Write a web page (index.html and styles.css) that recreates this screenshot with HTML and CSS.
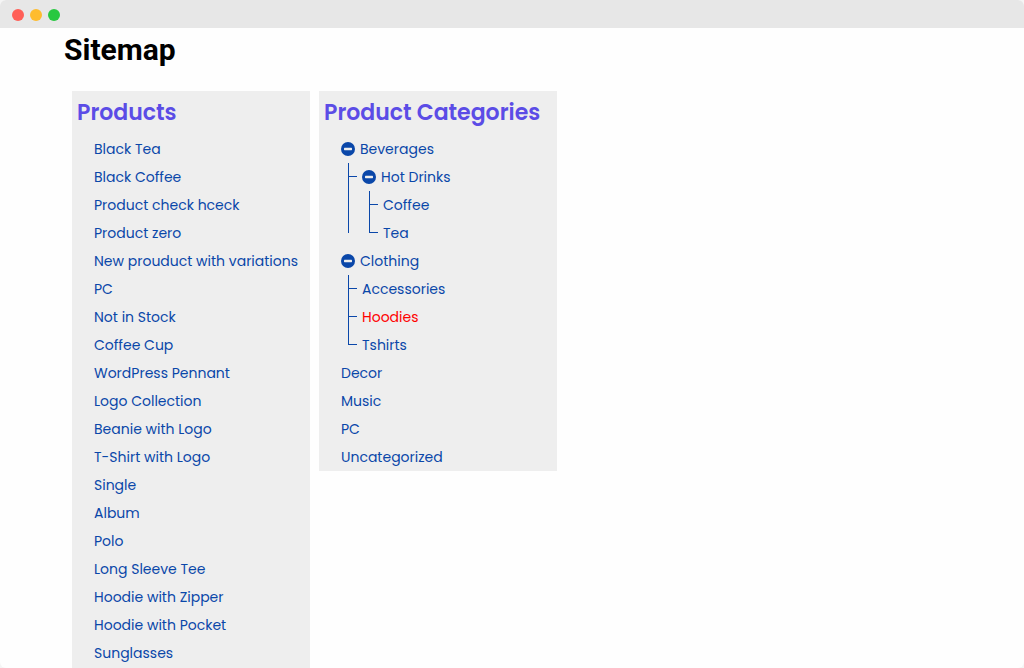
FILE: index.html
```
<!DOCTYPE html>
<html lang="en">
<head>
    <meta charset="UTF-8">
    <meta name="viewport" content="width=device-width, initial-scale=1.0">
    <title>Sitemap</title>
    <link rel="stylesheet" href="styles.css">
</head>
<body>
    <div class="window">
        <!-- Window bar -->
        <div class="window-bar">
            <span class="dot dot-red"></span>
            <span class="dot dot-yellow"></span>
            <span class="dot dot-green"></span>
        </div>

        <main class="sitemap">
            <h1>Sitemap</h1>
            <div class="columns">
                <!-- Products -->
                <section class="box box-full">
                    <h2>Products</h2>
                    <ul class="list">
                        <li><a href="#">Black Tea</a></li>
                        <li><a href="#">Black Coffee</a></li>
                        <li><a href="#">Product check hceck</a></li>
                        <li><a href="#">Product zero</a></li>
                        <li><a href="#">New prouduct with variations</a></li>
                        <li><a href="#">PC</a></li>
                        <li><a href="#">Not in Stock</a></li>
                        <li><a href="#">Coffee Cup</a></li>
                        <li><a href="#">WordPress Pennant</a></li>
                        <li><a href="#">Logo Collection</a></li>
                        <li><a href="#">Beanie with Logo</a></li>
                        <li><a href="#">T-Shirt with Logo</a></li>
                        <li><a href="#">Single</a></li>
                        <li><a href="#">Album</a></li>
                        <li><a href="#">Polo</a></li>
                        <li><a href="#">Long Sleeve Tee</a></li>
                        <li><a href="#">Hoodie with Zipper</a></li>
                        <li><a href="#">Hoodie with Pocket</a></li>
                        <li><a href="#">Sunglasses</a></li>
                    </ul>
                </section>

                <!-- Product categories -->
                <section class="box">
                    <h2>Product Categories</h2>
                    <ul class="list">
                        <li>
                            <div class="row">
                                <button type="button" class="toggle" aria-label="Toggle Beverages" aria-expanded="true">
                                    <svg viewBox="0 0 14 14"><circle cx="7" cy="7" r="7"/><rect class="bar" x="3" y="5.8" width="8" height="2.4" rx="0.6"/></svg>
                                </button>
                                <a href="#">Beverages</a>
                            </div>
                            <ul class="branch">
                                <li>
                                    <div class="row">
                                        <button type="button" class="toggle" aria-label="Toggle Hot Drinks" aria-expanded="true">
                                            <svg viewBox="0 0 14 14"><circle cx="7" cy="7" r="7"/><rect class="bar" x="3" y="5.8" width="8" height="2.4" rx="0.6"/></svg>
                                        </button>
                                        <a href="#">Hot Drinks</a>
                                    </div>
                                    <ul class="branch">
                                        <li><a href="#">Coffee</a></li>
                                        <li><a href="#">Tea</a></li>
                                    </ul>
                                </li>
                            </ul>
                        </li>
                        <li>
                            <div class="row">
                                <button type="button" class="toggle" aria-label="Toggle Clothing" aria-expanded="true">
                                    <svg viewBox="0 0 14 14"><circle cx="7" cy="7" r="7"/><rect class="bar" x="3" y="5.8" width="8" height="2.4" rx="0.6"/></svg>
                                </button>
                                <a href="#">Clothing</a>
                            </div>
                            <ul class="branch">
                                <li><a href="#">Accessories</a></li>
                                <li><a href="#" class="active">Hoodies</a></li>
                                <li><a href="#">Tshirts</a></li>
                            </ul>
                        </li>
                        <li><a href="#">Decor</a></li>
                        <li><a href="#">Music</a></li>
                        <li><a href="#">PC</a></li>
                        <li><a href="#">Uncategorized</a></li>
                    </ul>
                </section>
            </div>
        </main>
    </div>

    <script>
        // Open and close a branch of the tree
        document.querySelectorAll('.toggle').forEach(function(button) {
            button.addEventListener('click', function() {
                const branch = button.parentElement.nextElementSibling;
                branch.hidden = !branch.hidden;
                button.setAttribute('aria-expanded', String(!branch.hidden));
            });
        });
    </script>
</body>
</html>
```
FILE: styles.css
```
body, h1, h2, ul, li, button {
    margin: 0;
    padding: 0;
    list-style: none;
    box-sizing: border-box;
}

html {
    background-color: #f5f5f5;
}

body {
    font-family: Poppins, Inter, sans-serif;
    font-size: 14px;
    line-height: 28px;
    color: #0a47a9;
}

.window {
    display: flex;
    flex-direction: column;
    min-height: 100vh;
    background-color: #fefefe;
    border-radius: 6px;
    overflow: hidden;
}

.window-bar {
    display: flex;
    align-items: center;
    gap: 6px;
    height: 28px;
    padding: 2px 12px 0;
    box-sizing: border-box;
    background-color: #e7e7e7;
}

.dot {
    width: 12px;
    height: 12px;
    border-radius: 50%;
}

.dot-red {
    background-color: #ff5f57;
}

.dot-yellow {
    background-color: #febc2e;
}

.dot-green {
    background-color: #28c840;
}

.sitemap {
    flex: 1;
    display: flex;
    flex-direction: column;
    padding: 0 64px;
}

.sitemap h1 {
    font-family: Roboto, sans-serif;
    font-size: 30px;
    line-height: 44px;
    font-weight: bold;
    color: #000;
}

.columns {
    flex: 1;
    display: flex;
    flex-wrap: wrap;
    align-items: flex-start;
    gap: 9px;
    padding: 19px 8px 0;
}

.box {
    width: 238px;
    padding-left: 5px;
    box-sizing: border-box;
    background-color: #eee;
}

.box-full {
    align-self: stretch;
}

.box h2 {
    font-size: 22px;
    line-height: 44px;
    font-weight: 600;
    color: #5b4ce6;
    white-space: nowrap;
}

.list {
    padding-left: 17px;
}

.list a {
    color: inherit;
    text-decoration: none;
    white-space: nowrap;
}

.list a:hover,
.list a.active {
    color: #f00;
}

.row {
    display: flex;
    align-items: center;
    gap: 5px;
}

.toggle {
    width: 14px;
    height: 14px;
    border: none;
    background: none;
    cursor: pointer;
}

.toggle svg {
    display: block;
    fill: #0a47a9;
}

.toggle .bar {
    fill: #eee;
}

/* Tree lines */
.branch {
    position: relative;
    padding-left: 7px;
}

.branch::before {
    content: "";
    position: absolute;
    top: 0;
    bottom: 14px;
    left: 7px;
    border-left: 1px solid #0a47a9;
}

.branch > li {
    position: relative;
    padding-left: 14px;
}

.branch > li::before {
    content: "";
    position: absolute;
    top: 13px;
    left: 0;
    width: 9px;
    border-top: 1px solid #0a47a9;
}
```
